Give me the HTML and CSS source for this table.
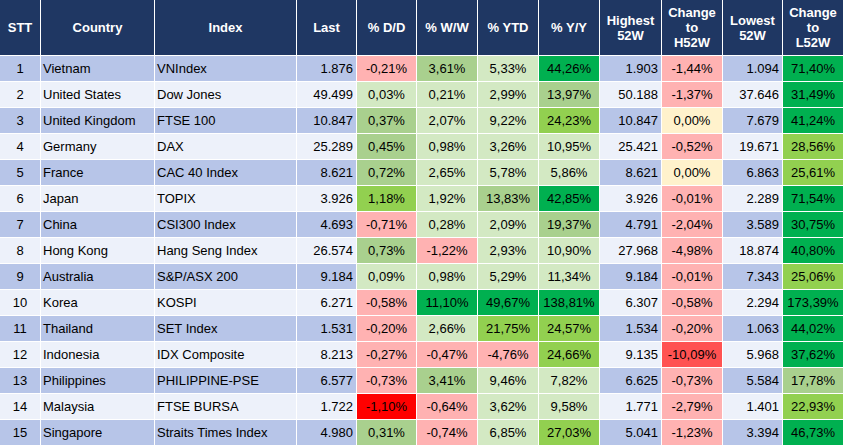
FILE: index.html
```html
<!DOCTYPE html>
<html>
<head>
<meta charset="utf-8">
<link rel="stylesheet" href="styles.css">
</head>
<body>
<div class="table">
  <div class="row head">
    <div>STT</div><div>Country</div><div>Index</div><div>Last</div><div>% D/D</div><div>% W/W</div><div>% YTD</div><div>% Y/Y</div><div>Highest<br>52W</div><div>Change<br>to<br>H52W</div><div>Lowest<br>52W</div><div>Change<br>to<br>L52W</div>
  </div>
  <div class="row odd">
    <div class="stt">1</div><div class="txt">Vietnam</div><div class="txt">VNIndex</div><div class="num">1.876</div><div class="pct pk">-0,21%</div><div class="pct mg">3,61%</div><div class="pct lg">5,33%</div><div class="pct dg">44,26%</div><div class="num">1.903</div><div class="pct pk">-1,44%</div><div class="num">1.094</div><div class="pct dg">71,40%</div>
  </div>
  <div class="row even">
    <div class="stt">2</div><div class="txt">United States</div><div class="txt">Dow Jones</div><div class="num">49.499</div><div class="pct lg">0,03%</div><div class="pct lg">0,21%</div><div class="pct lg">2,99%</div><div class="pct mg">13,97%</div><div class="num">50.188</div><div class="pct pk">-1,37%</div><div class="num">37.646</div><div class="pct dg">31,49%</div>
  </div>
  <div class="row odd">
    <div class="stt">3</div><div class="txt">United Kingdom</div><div class="txt">FTSE 100</div><div class="num">10.847</div><div class="pct mg">0,37%</div><div class="pct lg">2,07%</div><div class="pct lg">9,22%</div><div class="pct lime">24,23%</div><div class="num">10.847</div><div class="pct yl">0,00%</div><div class="num">7.679</div><div class="pct dg">41,24%</div>
  </div>
  <div class="row even">
    <div class="stt">4</div><div class="txt">Germany</div><div class="txt">DAX</div><div class="num">25.289</div><div class="pct mg">0,45%</div><div class="pct lg">0,98%</div><div class="pct lg">3,26%</div><div class="pct lg">10,95%</div><div class="num">25.421</div><div class="pct pk">-0,52%</div><div class="num">19.671</div><div class="pct lime">28,56%</div>
  </div>
  <div class="row odd">
    <div class="stt">5</div><div class="txt">France</div><div class="txt">CAC 40 Index</div><div class="num">8.621</div><div class="pct mg">0,72%</div><div class="pct lg">2,65%</div><div class="pct lg">5,78%</div><div class="pct lg">5,86%</div><div class="num">8.621</div><div class="pct yl">0,00%</div><div class="num">6.863</div><div class="pct lime">25,61%</div>
  </div>
  <div class="row even">
    <div class="stt">6</div><div class="txt">Japan</div><div class="txt">TOPIX</div><div class="num">3.926</div><div class="pct lime">1,18%</div><div class="pct lg">1,92%</div><div class="pct mg">13,83%</div><div class="pct dg">42,85%</div><div class="num">3.926</div><div class="pct pk">-0,01%</div><div class="num">2.289</div><div class="pct dg">71,54%</div>
  </div>
  <div class="row odd">
    <div class="stt">7</div><div class="txt">China</div><div class="txt">CSI300 Index</div><div class="num">4.693</div><div class="pct pk">-0,71%</div><div class="pct lg">0,28%</div><div class="pct lg">2,09%</div><div class="pct mg">19,37%</div><div class="num">4.791</div><div class="pct pk">-2,04%</div><div class="num">3.589</div><div class="pct dg">30,75%</div>
  </div>
  <div class="row even">
    <div class="stt">8</div><div class="txt">Hong Kong</div><div class="txt">Hang Seng Index</div><div class="num">26.574</div><div class="pct mg">0,73%</div><div class="pct pk">-1,22%</div><div class="pct lg">2,93%</div><div class="pct lg">10,90%</div><div class="num">27.968</div><div class="pct pk">-4,98%</div><div class="num">18.874</div><div class="pct dg">40,80%</div>
  </div>
  <div class="row odd">
    <div class="stt">9</div><div class="txt">Australia</div><div class="txt">S&amp;P/ASX 200</div><div class="num">9.184</div><div class="pct lg">0,09%</div><div class="pct lg">0,98%</div><div class="pct lg">5,29%</div><div class="pct lg">11,34%</div><div class="num">9.184</div><div class="pct pk">-0,01%</div><div class="num">7.343</div><div class="pct lime">25,06%</div>
  </div>
  <div class="row even">
    <div class="stt">10</div><div class="txt">Korea</div><div class="txt">KOSPI</div><div class="num">6.271</div><div class="pct pk">-0,58%</div><div class="pct dg">11,10%</div><div class="pct dg">49,67%</div><div class="pct dg">138,81%</div><div class="num">6.307</div><div class="pct pk">-0,58%</div><div class="num">2.294</div><div class="pct dg">173,39%</div>
  </div>
  <div class="row odd">
    <div class="stt">11</div><div class="txt">Thailand</div><div class="txt">SET Index</div><div class="num">1.531</div><div class="pct pk">-0,20%</div><div class="pct lg">2,66%</div><div class="pct lime">21,75%</div><div class="pct lime">24,57%</div><div class="num">1.534</div><div class="pct pk">-0,20%</div><div class="num">1.063</div><div class="pct dg">44,02%</div>
  </div>
  <div class="row even">
    <div class="stt">12</div><div class="txt">Indonesia</div><div class="txt">IDX Composite</div><div class="num">8.213</div><div class="pct pk">-0,27%</div><div class="pct pk">-0,47%</div><div class="pct pk">-4,76%</div><div class="pct lime">24,66%</div><div class="num">9.135</div><div class="pct rd2">-10,09%</div><div class="num">5.968</div><div class="pct dg">37,62%</div>
  </div>
  <div class="row odd">
    <div class="stt">13</div><div class="txt">Philippines</div><div class="txt">PHILIPPINE-PSE</div><div class="num">6.577</div><div class="pct pk">-0,73%</div><div class="pct mg">3,41%</div><div class="pct lg">9,46%</div><div class="pct lg">7,82%</div><div class="num">6.625</div><div class="pct pk">-0,73%</div><div class="num">5.584</div><div class="pct mg">17,78%</div>
  </div>
  <div class="row even">
    <div class="stt">14</div><div class="txt">Malaysia</div><div class="txt">FTSE BURSA</div><div class="num">1.722</div><div class="pct rd">-1,10%</div><div class="pct pk">-0,64%</div><div class="pct lg">3,62%</div><div class="pct lg">9,58%</div><div class="num">1.771</div><div class="pct pk">-2,79%</div><div class="num">1.401</div><div class="pct lime">22,93%</div>
  </div>
  <div class="row odd">
    <div class="stt">15</div><div class="txt">Singapore</div><div class="txt">Straits Times Index</div><div class="num">4.980</div><div class="pct mg">0,31%</div><div class="pct pk">-0,74%</div><div class="pct lg">6,85%</div><div class="pct lime">27,03%</div><div class="num">5.041</div><div class="pct pk">-1,23%</div><div class="num">3.394</div><div class="pct dg">46,73%</div>
  </div>
</div>
</body>
</html>
```
FILE: styles.css
```css
html, body {
  margin: 0;
  padding: 0;
  background: #ffffff;
}
body {
  font-family: "Liberation Sans", Arial, sans-serif;
  font-size: 13px;
  color: #000;
}
.table {
  display: flex;
  flex-direction: column;
  gap: 1px;
  width: 843px;
}
.row {
  display: grid;
  grid-template-columns: 40px 113px 141px 59px 59px 60px 60px 60px 61px 60px 59px 60px;
  column-gap: 1px;
  height: 25px;
}
.row > div {
  display: flex;
  align-items: center;
  white-space: nowrap;
  overflow: hidden;
}
.head {
  height: 55px;
}
.head > div {
  background: #1f3763;
  color: #fff;
  font-weight: bold;
  justify-content: center;
  text-align: center;
  line-height: 15px;
}
.odd > div { background: #b7c5e8; }
.even > div { background: #edf1fa; }
.stt { justify-content: center; }
.txt { padding-left: 2px; }
.num { justify-content: flex-end; padding-right: 3px; }
.pct { justify-content: center; }
.row > .pk { background: #ffb2b2; }
.row > .lg { background: #d3e9c3; }
.row > .mg { background: #a9d08e; }
.row > .lime { background: #92d050; }
.row > .dg { background: #00b050; }
.row > .yl { background: #fff2cc; }
.row > .rd { background: #ff0000; }
.row > .rd2 { background: #ff5252; }
```
